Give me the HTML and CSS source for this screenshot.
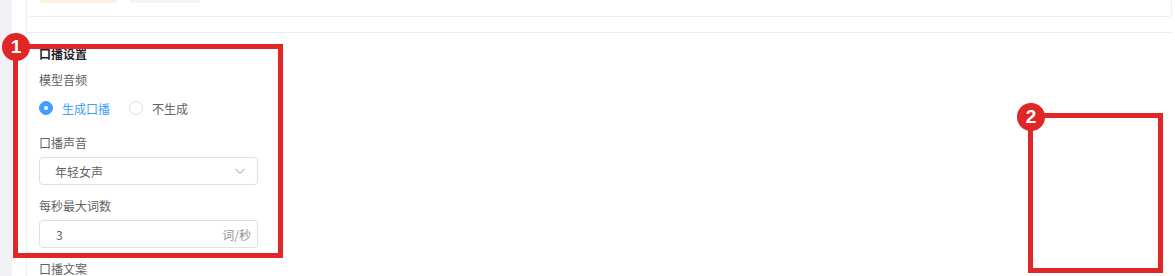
FILE: index.html
```html
<!DOCTYPE html>
<html lang="zh-Hans">

<head>
    <meta charset="UTF-8">
    <meta name="viewport" content="width=device-width, initial-scale=1.0">
    <title>口播设置</title>
    <link rel="stylesheet" href="styles.css">
</head>

<body>
    <div class="page">
        <div class="side"></div>
        <div class="main">
            <div class="panel">
                <div class="top-card">
                    <div class="top-row">
                        <span class="tip"></span>
                        <span class="tip-gray"></span>
                    </div>
                </div>
                <div class="section">
                    <div class="section-title">口播设置</div>

                    <div class="form-item">
                        <div class="form-label">模型音频</div>
                        <div class="radio-group">
                            <label class="radio checked"><span class="radio-dot"></span>生成口播</label>
                            <label class="radio"><span class="radio-dot"></span>不生成</label>
                        </div>
                    </div>

                    <div class="form-item">
                        <div class="form-label">口播声音</div>
                        <div class="select">
                            <span>年轻女声</span>
                            <svg class="arrow" width="14" height="14" viewBox="0 0 14 14">
                                <path d="M2.5 5 L7 9.5 L11.5 5" fill="none" stroke="#c0c4cc" stroke-width="1.2" />
                            </svg>
                        </div>
                    </div>

                    <div class="form-item">
                        <div class="form-label">每秒最大词数</div>
                        <div class="input">
                            <span>3</span>
                            <span class="suffix">词/秒</span>
                        </div>
                    </div>

                    <div class="form-item">
                        <div class="form-label">口播文案</div>
                    </div>
                </div>
            </div>
        </div>

        <!-- 标注框 -->
        <div class="mark mark-1"></div>
        <div class="badge badge-1">1</div>
        <div class="mark mark-2"></div>
        <div class="badge badge-2">2</div>
    </div>
</body>

</html>
```

FILE: styles.css
```css
body {
    margin: 0;
    font-family: "Noto Sans CJK SC", "Liberation Sans", sans-serif;
    font-size: 12px;
    color: #606266;
    background-color: #ffffff;
}

.page {
    position: relative;
    display: flex;
    height: 276px;
    overflow: hidden;
}

.side {
    width: 12px;
    background-color: #f0f2f5;
}

.main {
    flex: 1;
    padding-left: 14px;
    padding-right: 3px;
    background-color: #ffffff;
}

.panel {
    height: 100%;
    border-left: 1px solid #ebeef5;
}

.top-card {
    height: 16px;
    border: 1px solid #ebeef5;
    border-top: none;
    border-left: none;
    border-radius: 0 0 4px 4px;
    overflow: hidden;
}

/* 上方卡片内容只露出一点底边 */
.top-row {
    padding-left: 13px;
    display: flex;
    gap: 13px;
}

.tip {
    width: 77px;
    height: 3px;
    border-radius: 0 0 2px 2px;
    background-color: #fbf1dc;
}

.tip-gray {
    width: 70px;
    height: 3px;
    border-radius: 0 0 2px 2px;
    background-color: #f4f4f5;
}

.section {
    margin-top: 15px;
    border-top: 1px solid #ebeef5;
    padding: 11px 12px 0;
}

.section-title {
    line-height: 20px;
    font-weight: 600;
    color: #1f2329;
    margin-bottom: 6px;
}

.form-item {
    margin-bottom: 11px;
}

.form-label {
    line-height: 20px;
    margin-bottom: 4px;
}

.radio-group {
    display: flex;
    align-items: center;
    height: 28px;
}

.radio {
    display: flex;
    align-items: center;
    margin-right: 19px;
    color: #606266;
}

.radio.checked {
    color: #409eff;
}

.radio-dot {
    width: 12px;
    height: 12px;
    border: 1px solid #dcdfe6;
    border-radius: 50%;
    margin-right: 9px;
    box-sizing: content-box;
    position: relative;
}

.radio.checked .radio-dot {
    background-color: #409eff;
    border-color: #409eff;
}

.radio.checked .radio-dot::after {
    content: "";
    position: absolute;
    left: 4px;
    top: 4px;
    width: 4px;
    height: 4px;
    border-radius: 50%;
    background-color: #ffffff;
}

.select,
.input {
    width: 219px;
    height: 28px;
    box-sizing: border-box;
    border: 1px solid #dcdfe6;
    border-radius: 4px;
    display: flex;
    align-items: center;
    justify-content: space-between;
    padding: 0 8px 0 15px;
    color: #606266;
}

.select .arrow {
    margin-right: 2px;
}

.input {
    padding-left: 16px;
    padding-right: 6px;
}

.suffix {
    color: #909399;
}

.mark {
    position: absolute;
    border: 5px solid #e02626;
    box-sizing: border-box;
}

.mark-1 {
    left: 13px;
    top: 44px;
    width: 270px;
    height: 214px;
}

.mark-2 {
    left: 1028px;
    top: 113px;
    width: 135px;
    height: 160px;
}

.badge {
    position: absolute;
    width: 28px;
    height: 28px;
    border-radius: 50%;
    background-color: #e02626;
    color: #ffffff;
    font-family: "Liberation Sans", Arial, sans-serif;
    font-weight: bold;
    font-size: 19px;
    line-height: 28px;
    text-align: center;
}

.badge-1 {
    left: 2px;
    top: 33px;
}

.badge-2 {
    left: 1017px;
    top: 103px;
}
```
